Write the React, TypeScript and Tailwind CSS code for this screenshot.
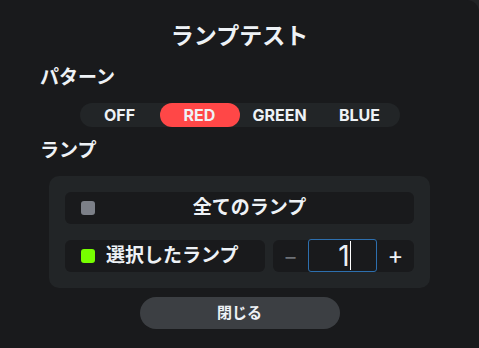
import React from "react";

export default function App() {
  const patterns = ["OFF", "RED", "GREEN", "BLUE"];
  return (
    <div
      className="w-[479px] h-[348px] bg-[#222426] overflow-hidden text-[#eef2f6]"
      style={{ fontFamily: '"Inter", "Noto Sans CJK JP", sans-serif' }}
    >
      <div className="w-[479px] h-[348px] bg-[#191a1c] rounded-tr-[12px] flex flex-col">
        <div className="mt-[21px] h-[30px] text-center text-[23px] font-bold leading-[30px]">ランプテスト</div>
        <div className="mt-[13px] pl-[40px] text-[19px] font-bold leading-[28px] h-[28px]">パターン</div>
        <div className="flex justify-center mt-[11px]">
          <div className="flex w-[320px] h-[24px] rounded-full bg-[#222527]">
            {patterns.map((p) => (
              <div
                key={p}
                className={
                  "w-[80px] h-[24px] flex items-center justify-center text-[16px] font-bold rounded-full " +
                  (p === "RED" ? "bg-[#ff4747]" : "")
                }
              >
                {p}
              </div>
            ))}
          </div>
        </div>
        <div className="mt-[10px] pl-[40px] text-[19px] font-bold leading-[28px] h-[28px]">ランプ</div>
        <div className="mx-[49px] mt-[11px] h-[112px] rounded-[10px] bg-[#222527] p-[16px] flex flex-col gap-[16px]">
          <div className="h-[32px] rounded-[6px] bg-[#191a1c] flex items-center px-[16px]">
            <div className="w-[14px] h-[14px] rounded-[3px] bg-[#7c8088]" />
            <div className="flex-1 text-center text-[19px] font-bold pl-[6px]">全てのランプ</div>
          </div>
          <div className="h-[32px] flex gap-[8px]">
            <div className="w-[200px] h-[32px] rounded-[6px] bg-[#191a1c] flex items-center px-[16px] gap-[11px]">
              <div className="w-[14px] h-[14px] rounded-[3px] bg-[#77ff00]" />
              <div className="text-[19px] font-bold">選択したランプ</div>
            </div>
            <div className="flex-1 h-[32px] rounded-[6px] bg-[#191a1c] flex items-center">
              <div className="w-[35px] text-center text-[22px] text-[#6d7177] leading-none">−</div>
              <div className="w-[69px] h-[33px] -mt-[1px] border border-[#2d6fae] rounded-[3px] flex items-center justify-center pl-[4px] text-[28px] font-normal leading-none">
                <span>1</span>
                <span className="w-[1px] h-[29px] bg-white" />
              </div>
              <div className="flex-1 text-center text-[24px] leading-none">+</div>
            </div>
          </div>
        </div>
        <div className="flex justify-center mt-[9px]">
          <div className="w-[200px] h-[32px] rounded-full bg-[#3c3f43] flex items-center justify-center text-[15px] font-bold">
            閉じる
          </div>
        </div>
      </div>
    </div>
  );
}
